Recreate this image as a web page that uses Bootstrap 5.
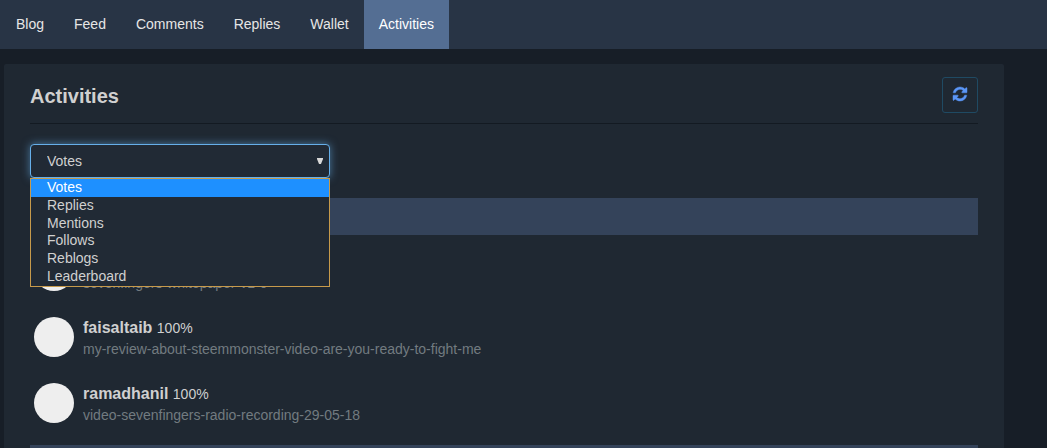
<!DOCTYPE html>
<html lang="en">
<head>
<meta charset="utf-8">
<meta name="viewport" content="width=device-width, initial-scale=1">
<title>Activities</title>
<link href="https://cdn.jsdelivr.net/npm/bootstrap@5.3.0/dist/css/bootstrap.min.css" rel="stylesheet">
<style>
  body { background: #171e27; color: #d0d0d0; font: 14px/20px "Liberation Sans", Arial, sans-serif; }
  .main-nav { background: #283445; padding-left: 1px; }
  .main-nav .nav-link { color: #e6e6e6; padding: 14px 15px 15px; line-height: 20px; border-radius: 0; }
  .main-nav .nav-link.active { background: #546e93; color: #fff; }
  .panel { background: #1f2832; max-width: 1000px; margin: 15px 4px 0; padding: 13px 26px 0; border-radius: 2px; }
  .panel-head { border-bottom: 1px solid #131a22; padding-bottom: 10px; margin-bottom: 20px; }
  .panel-head h1 { font-size: 20px; line-height: 34px; padding-top: 2px; font-weight: 700; }
  .btn-refresh { width: 36px; height: 36px; padding: 0 0 2px; border: 1px solid #1f4a63; border-radius: 3px; color: #5b96f7; }
  .btn-refresh:hover { border-color: #5b96f7; color: #8ab4fa; }
  .picker { max-width: 300px; margin-bottom: 20px; }
  .picker .form-select { height: 34px; padding: 0 16px; font-size: 14px; line-height: 20px; color: #d0d0d0; background: #212a35; border: 1px solid #66afe9; border-radius: 4px; box-shadow: 0 0 8px rgba(102,175,233,.6); }
  .picker-arrow { right: 7px; top: 14px; pointer-events: none; }
  .picker .dropdown-menu { top: 100%; left: 0; background: #212a35; border: 1px solid #c79a4b; border-radius: 0; padding: 0; font-size: 14px; }
  .picker .dropdown-item { color: #d0d0d0; padding: 0 16px 2px; line-height: 16px; }
  .picker li:nth-child(3) .dropdown-item { padding-bottom: 1px; }
  .picker .dropdown-item.active, .picker .dropdown-item:hover { background: #1e90ff; color: #fff; }
  .day-band { background: #34435a; height: 37px; }
  .votes { padding: 16px 4px 22px; gap: 26px; }
  .vote { gap: 9px; height: 40px; }
  .avatar { width: 40px; height: 40px; background: #eee; }
  .vote-head { font-size: 16px; line-height: 22px; min-height: 22px; }
  .vote-weight { font-size: 14px; }
  .voter { color: #d0d0d0; text-decoration: none; }
  .post { color: #727b80; text-decoration: none; line-height: 20px; }
</style>
</head>
<body class="vh-100 overflow-hidden">
<nav class="main-nav nav">
  <a class="nav-link" href="#">Blog</a>
  <a class="nav-link" href="#">Feed</a>
  <a class="nav-link" href="#">Comments</a>
  <a class="nav-link" href="#">Replies</a>
  <a class="nav-link" href="#">Wallet</a>
  <a class="nav-link active" href="#" aria-current="page">Activities</a>
</nav>
<main class="panel">
  <header class="panel-head d-flex justify-content-between align-items-center">
    <h1 class="mb-0">Activities</h1>
    <button type="button" class="btn btn-refresh d-flex align-items-center justify-content-center" aria-label="Refresh">
      <svg width="14" height="14" viewBox="0 0 1536 1536" fill="currentColor" stroke="currentColor" stroke-width="50" overflow="visible" aria-hidden="true"><path d="M1511 928q0 5-1 7-64 268-268 434.500T764 1536q-146 0-282.500-55T238 1324l-129 129q-19 19-45 19t-45-19-19-45V960q0-26 19-45t45-19h448q26 0 45 19t19 45-19 45l-137 137q71 66 161 102t187 36q134 0 250-65t186-179q11-17 53-117 8-23 30-23h192q13 0 22.500 9.500t9.500 22.500zm25-800v448q0 26-19 45t-45 19h-448q-26 0-45-19t-19-45 19-45l138-138Q969 256 768 256q-134 0-250 65T332 500q-11 17-53 117-8 23-30 23H50q-13 0-22.500-9.500T18 608v-7q65-268 270-434.500T768 0q146 0 284 55.500T1297 212l130-129q19-19 45-19t45 19 19 45z"/></svg>
    </button>
  </header>
  <div class="picker position-relative">
    <select class="form-select" aria-label="Activity type">
      <option selected>Votes</option>
      <option>Replies</option>
      <option>Mentions</option>
      <option>Follows</option>
      <option>Reblogs</option>
      <option>Leaderboard</option>
    </select>
    <svg class="picker-arrow position-absolute" width="6" height="6" viewBox="0 0 6 6" fill="#d8d8d8" aria-hidden="true"><path d="M0 0h6v1L4 6H2L0 1z"/></svg>
    <ul class="dropdown-menu show w-100 m-0">
      <li><button type="button" class="dropdown-item active">Votes</button></li>
      <li><button type="button" class="dropdown-item">Replies</button></li>
      <li><button type="button" class="dropdown-item">Mentions</button></li>
      <li><button type="button" class="dropdown-item">Follows</button></li>
      <li><button type="button" class="dropdown-item">Reblogs</button></li>
      <li><button type="button" class="dropdown-item">Leaderboard</button></li>
    </ul>
  </div>
  <div class="day-band"></div>
  <div class="votes d-flex flex-column">
    <article class="vote d-flex">
      <span class="avatar rounded-circle flex-shrink-0"></span>
      <div>
        <div class="vote-head"></div>
        <a class="post" href="#">sevenfingers-whitepaper-v1-0</a>
      </div>
    </article>
    <article class="vote d-flex">
      <span class="avatar rounded-circle flex-shrink-0"></span>
      <div>
        <div class="vote-head"><a class="voter fw-bold" href="#">faisaltaib</a> <span class="vote-weight">100%</span></div>
        <a class="post" href="#">my-review-about-steemmonster-video-are-you-ready-to-fight-me</a>
      </div>
    </article>
    <article class="vote d-flex">
      <span class="avatar rounded-circle flex-shrink-0"></span>
      <div>
        <div class="vote-head"><a class="voter fw-bold" href="#">ramadhanil</a> <span class="vote-weight">100%</span></div>
        <a class="post" href="#">video-sevenfingers-radio-recording-29-05-18</a>
      </div>
    </article>
  </div>
  <div class="day-band"></div>
</main>
<script src="https://cdn.jsdelivr.net/npm/bootstrap@5.3.0/dist/js/bootstrap.bundle.min.js"></script>
</body>
</html>
